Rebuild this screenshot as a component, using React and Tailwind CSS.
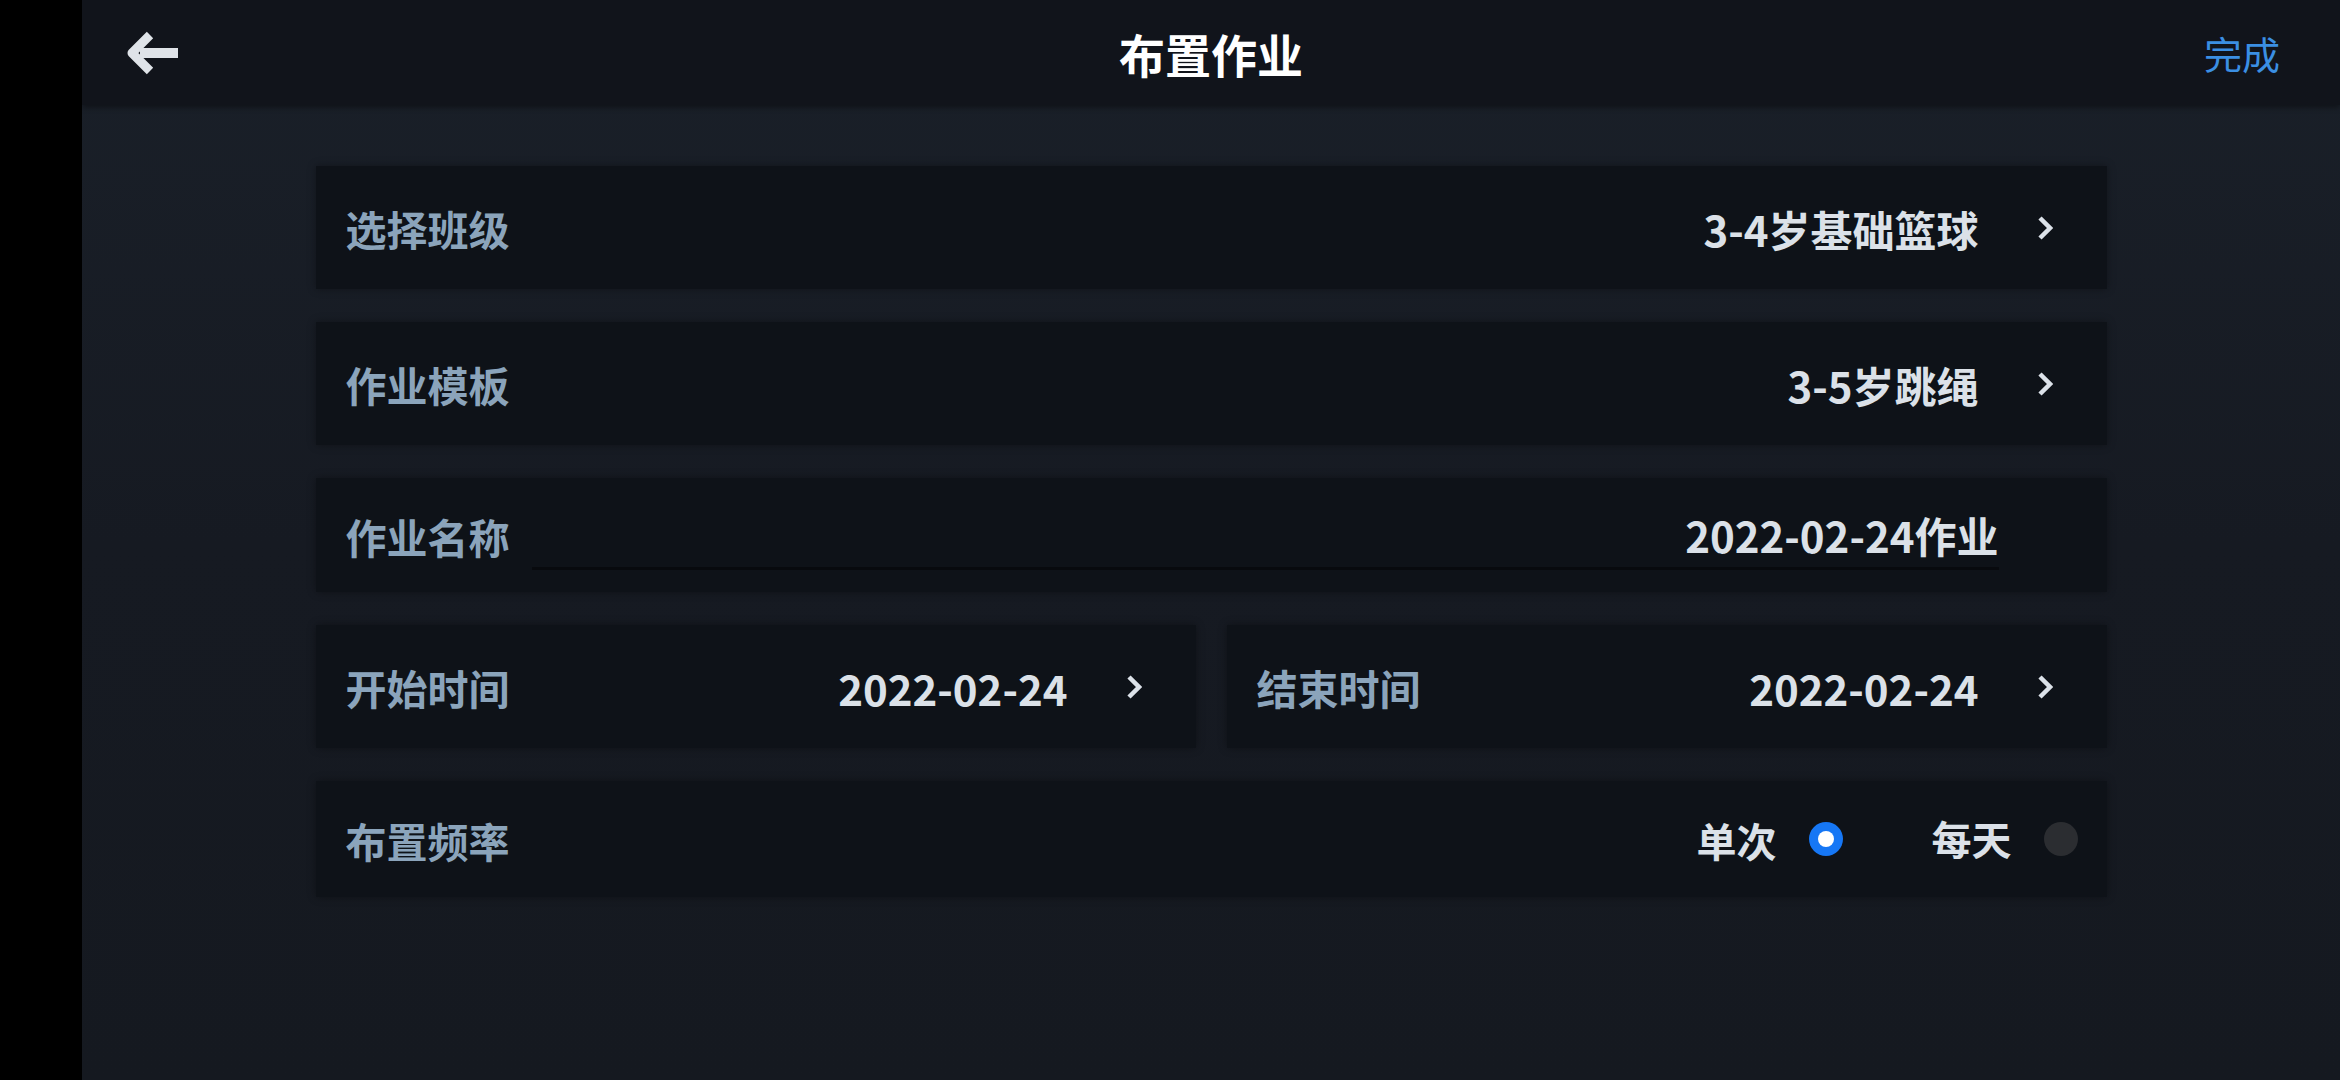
import React from 'react';

const font = { fontFamily: '"Noto Sans CJK SC", "Noto Sans", sans-serif' };

const Chevron = () => (
  <svg width="16" height="24" viewBox="0 0 16 24" className="shrink-0">
    <path d="M3 2 L13 12 L3 22" fill="none" stroke="#dce2e9" strokeWidth="4.5" strokeLinejoin="miter" />
  </svg>
);

const BackArrow = () => (
  <svg width="54" height="44" viewBox="0 0 54 44">
    <path d="M24 4 L6 22 L24 40" fill="none" stroke="#dfe3e8" strokeWidth="9" strokeLinejoin="round" />
    <path d="M14 22 L52 22" fill="none" stroke="#dfe3e8" strokeWidth="10" />
  </svg>
);

const Card = ({ className = '', children }) => (
  <div
    className={`flex items-center bg-[#0e1218] shadow-[0_0_8px_rgba(0,0,0,0.35)] ${className}`}
  >
    {children}
  </div>
);

const Label = ({ children }) => (
  <span className="pt-[2px] text-[41px] font-bold leading-none text-[#8ba4bb]">{children}</span>
);

const Value = ({ children, size = 'text-[42px]' }) => (
  <span className={`${size} pt-[2px] font-bold leading-none text-[#dbe1e8]`}>{children}</span>
);

const SelectRow = ({ label, value, className = '' }) => (
  <Card className={`h-[123px] pl-[30px] pr-[54px] ${className}`}>
    <Label>{label}</Label>
    <div className="ml-auto flex items-center gap-[58px]">
      <Value>{value}</Value>
      <Chevron />
    </div>
  </Card>
);

const Radio = ({ checked }) =>
  checked ? (
    <span className="flex h-[34px] w-[34px] items-center justify-center rounded-full bg-[#1677f5]">
      <span className="block h-[16px] w-[16px] rounded-full bg-white" />
    </span>
  ) : (
    <span className="block h-[34px] w-[34px] rounded-full bg-[#2b2d31]" />
  );

export default function App() {
  return (
    <div className="flex h-[1080px] w-[2340px] overflow-hidden bg-black" style={font}>
      <div className="w-[82px] shrink-0 bg-black" />
      <div className="flex flex-1 flex-col bg-gradient-to-b from-[#1a2029] via-[#161a22] to-[#151920]">
        <header className="flex h-[105px] shrink-0 items-center bg-[#11141b] shadow-[0_2px_6px_rgba(0,0,0,0.45)]">
          <div className="flex w-[240px] items-center pl-[44px]">
            <BackArrow />
          </div>
          <h1 className="flex-1 text-center text-[46px] font-bold leading-none text-white">
            布置作业
          </h1>
          <div className="w-[240px] pr-[60px] text-right text-[38px] leading-none text-[#3b8fe3]">
            完成
          </div>
        </header>

        <main className="mx-auto mt-[61px] flex w-[1791px] flex-col gap-[33px]">
          <SelectRow label="选择班级" value="3-4岁基础篮球" />
          <SelectRow label="作业模板" value="3-5岁跳绳" />

          <Card className="h-[114px] pl-[30px] pr-[108px]">
            <Label>作业名称</Label>
            <div className="ml-[22px] flex h-[70px] flex-1 items-center justify-end border-b-[3px] border-[#080a0e]">
              <Value>2022-02-24作业</Value>
            </div>
          </Card>

          <div className="flex gap-[31px]">
            <SelectRow label="开始时间" value="2022-02-24" className="flex-1" />
            <SelectRow label="结束时间" value="2022-02-24" className="flex-1" />
          </div>

          <Card className="h-[116px] pl-[30px] pr-[29px]">
            <Label>布置频率</Label>
            <div className="ml-auto flex items-center">
              <Value size="text-[40px]">单次</Value>
              <span className="ml-[32px]">
                <Radio checked />
              </span>
              <span className="ml-[89px]">
                <Value size="text-[40px]">每天</Value>
              </span>
              <span className="ml-[32px]">
                <Radio />
              </span>
            </div>
          </Card>
        </main>
      </div>
    </div>
  );
}
